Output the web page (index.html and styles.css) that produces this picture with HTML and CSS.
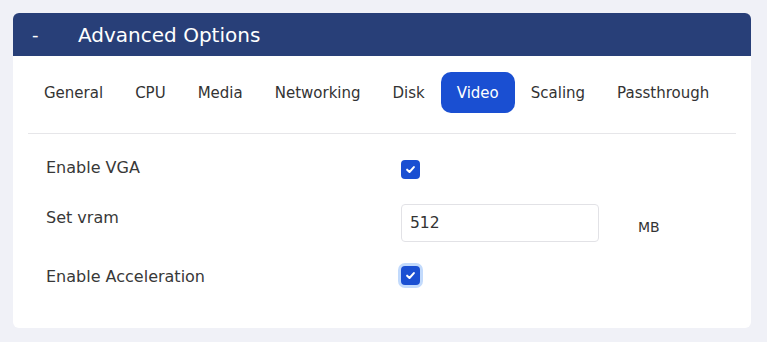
FILE: index.html
```html
<!DOCTYPE html>
<html lang="en">
<head>
  <meta charset="UTF-8" />
  <meta name="viewport" content="width=device-width, initial-scale=1.0"/>
  <title>Advanced Options</title>
  <link rel="stylesheet" href="styles.css">
</head>
<body>

  <!-- Advanced options panel -->
  <div class="panel">
    <div class="panel-header">
      <span class="toggle">-</span>
      <span class="panel-title">Advanced Options</span>
    </div>

    <div class="panel-body">
      <div class="tabs">
        <button class="tab">General</button>
        <button class="tab">CPU</button>
        <button class="tab">Media</button>
        <button class="tab">Networking</button>
        <button class="tab">Disk</button>
        <button class="tab active">Video</button>
        <button class="tab">Scaling</button>
        <button class="tab">Passthrough</button>
      </div>

      <div class="form">
        <div class="row row-check">
          <label class="label">Enable VGA</label>
          <span class="checkbox"><svg viewBox="0 0 12 12" width="11" height="11"><path d="M2.3 6.2 L4.9 8.7 L9.7 3.4" fill="none" stroke="#fff" stroke-width="2.2" stroke-linecap="round" stroke-linejoin="round"/></svg></span>
        </div>
        <div class="row row-input">
          <label class="label">Set vram</label>
          <input class="text-input" type="text" value="512">
          <span class="unit">MB</span>
        </div>
        <div class="row row-check row-last">
          <label class="label">Enable Acceleration</label>
          <span class="checkbox focused"><svg viewBox="0 0 12 12" width="11" height="11"><path d="M2.3 6.2 L4.9 8.7 L9.7 3.4" fill="none" stroke="#fff" stroke-width="2.2" stroke-linecap="round" stroke-linejoin="round"/></svg></span>
        </div>
      </div>
    </div>
  </div>

</body>
</html>
```

FILE: styles.css
```css
body, html {
  margin: 0;
  padding: 0;
  height: 100%;
  background-color: #f0f1f7;
  font-family: "DejaVu Sans", Verdana, sans-serif;
  color: #333;
}

body {
  padding: 13px 16px 0 13px;
  box-sizing: border-box;
}

.panel {
  background-color: #fff;
  border-radius: 6px;
  overflow: hidden;
}

.panel-header {
  background-color: #283f78;
  color: #fff;
  height: 43px;
  display: flex;
  align-items: center;
  padding-left: 19px;
}

.toggle {
  font-size: 18px;
  width: 46px;
}

.panel-title {
  font-size: 20px;
}

.panel-body {
  padding: 16px 15px 42px;
}

.tabs {
  display: flex;
  padding-bottom: 20px;
  border-bottom: 1px solid #e6e6e9;
}

.tab {
  font-family: inherit;
  font-size: 15px;
  color: #333;
  background: none;
  border: none;
  padding: 0 16px;
  height: 41px;
  border-radius: 10px;
  cursor: pointer;
}

.tab.active {
  background-color: #1a4fd2;
  color: #fff;
}

.form {
  padding: 16px 18px 0;
}

.row {
  display: flex;
  align-items: flex-start;
}

.label {
  width: 355px;
  font-size: 16px;
  color: #383838;
  line-height: 20px;
}

.row-check {
  height: 22px;
  margin-top: 8px;
}

.row-input {
  margin-top: 25px;
  margin-bottom: 22px;
}

.row-input .label {
  margin-top: 3px;
}

.row-last .label {
  margin-top: 3px;
}

.checkbox {
  width: 19px;
  height: 19px;
  margin-top: 2px;
  border-radius: 4px;
  background-color: #1a4fd2;
  display: flex;
  align-items: center;
  justify-content: center;
}

.checkbox.focused {
  box-shadow: 0 0 0 3px #c2dafc;
}

.text-input {
  width: 198px;
  height: 38px;
  margin-top: -1px;
  box-sizing: border-box;
  border: 1px solid #e2e2e6;
  border-radius: 4px;
  padding: 0 8px;
  font-family: inherit;
  font-size: 15.5px;
  color: #333;
}

.unit {
  margin-left: 39px;
  margin-top: 14px;
  font-size: 14px;
  color: #333;
}
```
